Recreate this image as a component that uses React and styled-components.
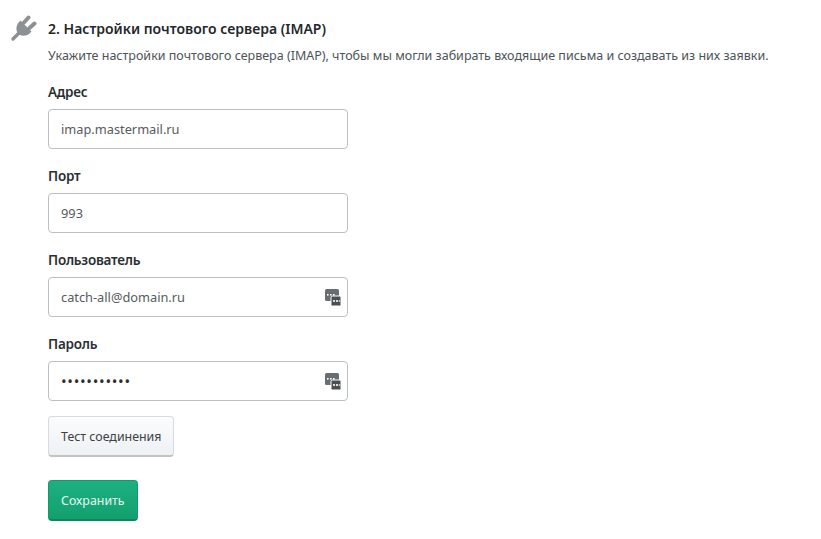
import React from 'react'
import styled, { createGlobalStyle } from 'styled-components'

const GlobalStyle = createGlobalStyle`
  html, body {
    margin: 0;
    padding: 0;
    background: #fff;
    font-family: "Noto Sans", "Open Sans", sans-serif;
    color: #2f3438;
  }
`

const Page = styled.div`
  display: flex;
  gap: 11px;
  padding: 15px 0 0 10px;
  width: 821px;
  height: 539px;
  box-sizing: border-box;
  overflow: hidden;
`

const IconCol = styled.div`
  width: 27px;
  flex: none;
`

const Content = styled.div`
  display: flex;
  flex-direction: column;
  align-items: flex-start;
`

const Title = styled.h2`
  margin: 0;
  font-size: 14px;
  line-height: 28px;
  font-weight: 600;
  color: #23282c;
`

const Hint = styled.p`
  margin: 0 0 12px;
  font-size: 12.5px;
  line-height: 26px;
  color: #4d5358;
  white-space: nowrap;
`

const Fields = styled.div`
  display: flex;
  flex-direction: column;
  gap: 16px;
  margin-bottom: 15px;
`

const Field = styled.div`
  display: flex;
  flex-direction: column;
`

const Label = styled.label`
  font-size: 13.5px;
  letter-spacing: -0.25px;
  line-height: 22px;
  font-weight: 600;
  color: #2a2f33;
  margin-bottom: 6px;
`

const InputBox = styled.div`
  position: relative;
  width: 300px;
  height: 40px;
  box-sizing: border-box;
  border: 1px solid #bcc0c2;
  border-radius: 4px;
  background: #fff;
  display: flex;
  align-items: center;
  padding: 0 12px;
  font-size: ${({ $secret }) => ($secret ? '15px' : '12.8px')};
  color: ${({ $secret }) => ($secret ? '#2b2f33' : '#555b60')};
  letter-spacing: ${({ $secret }) => ($secret ? '0.7px' : '0')};
`

const Keys = styled.svg`
  position: absolute;
  right: 5px;
  top: 10px;
`

const Button = styled.button`
  display: block;
  box-sizing: border-box;
  height: 41px;
  padding: 0 12px;
  border-radius: 4px;
  font-family: inherit;
  font-size: 12.4px;
  cursor: pointer;
  border: 1px solid ${({ $primary }) => ($primary ? '#129a6c' : '#d8dbde')};
  border-bottom: 2px solid ${({ $primary }) => ($primary ? '#0e855d' : '#c0c4c7')};
  color: ${({ $primary }) => ($primary ? '#e6f8f0' : '#3c4145')};
  background: ${({ $primary }) =>
    $primary ? 'linear-gradient(#1db080, #13a06f)' : 'linear-gradient(#fbfcfd, #eef1f4)'};
  margin-bottom: ${({ $primary }) => ($primary ? '0' : '23px')};
`

const PlugIcon = () => (
  <svg width="27" height="27" viewBox="0 0 27 27" fill="none">
    <path d="M3 24l6-6" stroke="#8b9195" strokeWidth="3.4" strokeLinecap="round" />
    <path d="M10.5 5.5l11 11c-3 4.500-9.500 5.500-13 2.500-3.500-3.500-2.500-10 2-13.500z" fill="#8b9195" />
    <path d="M14 7.500L18.500 2.500M19.500 13l5-4.500" stroke="#8b9195" strokeWidth="4" strokeLinecap="round" />
  </svg>
)

const KeysIcon = () => (
  <Keys width="18" height="19" viewBox="0 0 18 19">
    <rect x="1" y="1" width="14" height="12" rx="1.5" fill="#686d71" />
    <rect x="7" y="8" width="10" height="10" rx="1.5" fill="#4a4f53" stroke="#fff" strokeWidth="1" />
    <g fill="#fff">
      <rect x="3" y="6" width="1.6" height="1.6" />
      <rect x="6" y="6" width="1.6" height="1.6" />
      <rect x="9" y="6" width="1.6" height="1.6" />
      <circle cx="10" cy="13" r="1.1" />
      <circle cx="13" cy="13" r="1.1" />
      <circle cx="15.4" cy="13" r="0.8" />
    </g>
  </Keys>
)

const fields = [
  { label: 'Адрес', value: 'imap.mastermail.ru' },
  { label: 'Порт', value: '993' },
  { label: 'Пользователь', value: 'catch-all@domain.ru', keys: true },
  { label: 'Пароль', value: '•••••••••••', keys: true, secret: true },
]

export default function App() {
  return (
    <Page>
      <GlobalStyle />
      <IconCol>
        <PlugIcon />
      </IconCol>
      <Content>
        <Title>2. Настройки почтового сервера (IMAP)</Title>
        <Hint>Укажите настройки почтового сервера (IMAP), чтобы мы могли забирать входящие письма и создавать из них заявки.</Hint>
        <Fields>
          {fields.map((f) => (
            <Field key={f.label}>
              <Label>{f.label}</Label>
              <InputBox $secret={f.secret}>
                {f.value}
                {f.keys && <KeysIcon />}
              </InputBox>
            </Field>
          ))}
        </Fields>
        <Button>Тест соединения</Button>
        <Button $primary>Сохранить</Button>
      </Content>
    </Page>
  )
}
